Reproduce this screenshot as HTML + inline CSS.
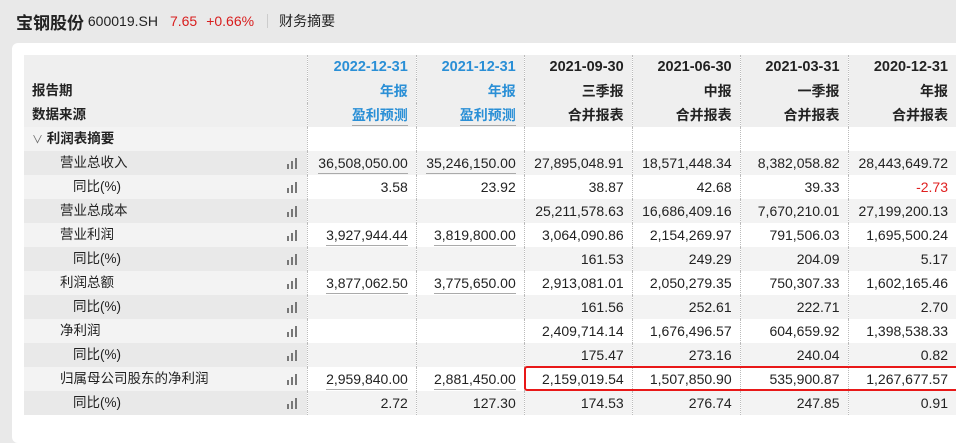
<!DOCTYPE html><html><head><meta charset="utf-8"><style>
*{margin:0;padding:0;box-sizing:border-box}
body{width:956px;height:414px;overflow:hidden;background:#e9e9e9;font-family:"Liberation Sans","Noto Sans CJK SC",sans-serif;color:#222;position:relative}
.top{position:absolute;left:16px;top:9px;height:24px;display:flex;align-items:center;font-size:14px;white-space:nowrap}
.card{position:absolute;left:12px;top:43px;width:960px;height:400px;background:#fff;border-radius:6px}
table{position:absolute;left:24px;top:55px;border-collapse:collapse;table-layout:fixed;font-size:14px}
td{height:24px;line-height:16px;padding:0 8px 0 0;text-align:right;white-space:nowrap;border-left:1px dotted #bbb;overflow:hidden}
td.l{text-align:left;border-left:none;padding:0;position:relative;font-size:13.5px}
tr.h td{background:#efefef;font-weight:bold}
tr.h td.d{font-size:14.5px}
tr.g td{background:#f3f3f3}tr.g td.l{background:#e9e9e9}
tr.w td{background:#fff}tr.w td.l{background:#f3f3f3}
.b{color:#2a8fd6}
.u span{border-bottom:1px solid #aaa;padding-bottom:2px}
.bars{position:absolute;right:9px;top:7px;width:11px;height:11px}
.bars i{position:absolute;bottom:0;width:2px;background:#777}
.r{color:#e02020}
</style></head><body>
<div class="top"><b style="font-size:17px">宝钢股份</b>&nbsp;600019.SH<span style="color:#d81e1e;margin-left:12px">7.65</span><span style="color:#d81e1e;margin-left:9px">+0.66%</span><span style="width:1px;height:14px;background:#ccc;margin:0 11px 0 13px"></span>财务摘要</div>
<div class="card"></div>
<table>
<colgroup><col style="width:284px"><col style="width:109px"><col style="width:108px"><col style="width:108px"><col style="width:108px"><col style="width:108px"><col style="width:108px"></colgroup>
<tr class="h"><td class="l"></td><td class="b d">2022-12-31</td><td class="b d">2021-12-31</td><td class="d">2021-09-30</td><td class="d">2021-06-30</td><td class="d">2021-03-31</td><td class="d">2020-12-31</td></tr>
<tr class="h"><td class="l" style="padding-left:8px">报告期</td><td class="b">年报</td><td class="b">年报</td><td>三季报</td><td>中报</td><td>一季报</td><td>年报</td></tr>
<tr class="h"><td class="l" style="padding-left:8px">数据来源</td><td class="b u"><span>盈利预测</span></td><td class="b u"><span>盈利预测</span></td><td>合并报表</td><td>合并报表</td><td>合并报表</td><td>合并报表</td></tr>
<tr class="w"><td class="l" style="padding-left:8px;font-weight:bold"><span style="font-weight:normal;color:#666;font-size:11px">∨</span> 利润表摘要</td><td></td><td></td><td></td><td></td><td></td><td></td></tr>
<tr class="g"><td class="l" style="padding-left:36px">营业总收入<span class="bars"><i style="left:0;height:5px"></i><i style="left:4px;height:8px"></i><i style="left:8px;height:11px"></i></span></td><td class="u"><span>36,508,050.00</span></td><td class="u"><span>35,246,150.00</span></td><td>27,895,048.91</td><td>18,571,448.34</td><td>8,382,058.82</td><td>28,443,649.72</td></tr>
<tr class="w"><td class="l" style="padding-left:49px">同比(%)<span class="bars"><i style="left:0;height:5px"></i><i style="left:4px;height:8px"></i><i style="left:8px;height:11px"></i></span></td><td>3.58</td><td>23.92</td><td>38.87</td><td>42.68</td><td>39.33</td><td class="r">-2.73</td></tr>
<tr class="g"><td class="l" style="padding-left:36px">营业总成本<span class="bars"><i style="left:0;height:5px"></i><i style="left:4px;height:8px"></i><i style="left:8px;height:11px"></i></span></td><td></td><td></td><td>25,211,578.63</td><td>16,686,409.16</td><td>7,670,210.01</td><td>27,199,200.13</td></tr>
<tr class="w"><td class="l" style="padding-left:36px">营业利润<span class="bars"><i style="left:0;height:5px"></i><i style="left:4px;height:8px"></i><i style="left:8px;height:11px"></i></span></td><td class="u"><span>3,927,944.44</span></td><td class="u"><span>3,819,800.00</span></td><td>3,064,090.86</td><td>2,154,269.97</td><td>791,506.03</td><td>1,695,500.24</td></tr>
<tr class="g"><td class="l" style="padding-left:49px">同比(%)<span class="bars"><i style="left:0;height:5px"></i><i style="left:4px;height:8px"></i><i style="left:8px;height:11px"></i></span></td><td></td><td></td><td>161.53</td><td>249.29</td><td>204.09</td><td>5.17</td></tr>
<tr class="w"><td class="l" style="padding-left:36px">利润总额<span class="bars"><i style="left:0;height:5px"></i><i style="left:4px;height:8px"></i><i style="left:8px;height:11px"></i></span></td><td class="u"><span>3,877,062.50</span></td><td class="u"><span>3,775,650.00</span></td><td>2,913,081.01</td><td>2,050,279.35</td><td>750,307.33</td><td>1,602,165.46</td></tr>
<tr class="g"><td class="l" style="padding-left:49px">同比(%)<span class="bars"><i style="left:0;height:5px"></i><i style="left:4px;height:8px"></i><i style="left:8px;height:11px"></i></span></td><td></td><td></td><td>161.56</td><td>252.61</td><td>222.71</td><td>2.70</td></tr>
<tr class="w"><td class="l" style="padding-left:36px">净利润<span class="bars"><i style="left:0;height:5px"></i><i style="left:4px;height:8px"></i><i style="left:8px;height:11px"></i></span></td><td></td><td></td><td>2,409,714.14</td><td>1,676,496.57</td><td>604,659.92</td><td>1,398,538.33</td></tr>
<tr class="g"><td class="l" style="padding-left:49px">同比(%)<span class="bars"><i style="left:0;height:5px"></i><i style="left:4px;height:8px"></i><i style="left:8px;height:11px"></i></span></td><td></td><td></td><td>175.47</td><td>273.16</td><td>240.04</td><td>0.82</td></tr>
<tr class="w"><td class="l" style="padding-left:36px">归属母公司股东的净利润<span class="bars"><i style="left:0;height:5px"></i><i style="left:4px;height:8px"></i><i style="left:8px;height:11px"></i></span></td><td class="u"><span>2,959,840.00</span></td><td class="u"><span>2,881,450.00</span></td><td>2,159,019.54</td><td>1,507,850.90</td><td>535,900.87</td><td>1,267,677.57</td></tr>
<tr class="g"><td class="l" style="padding-left:49px">同比(%)<span class="bars"><i style="left:0;height:5px"></i><i style="left:4px;height:8px"></i><i style="left:8px;height:11px"></i></span></td><td>2.72</td><td>127.30</td><td>174.53</td><td>276.74</td><td>247.85</td><td>0.91</td></tr>
</table>
<div style="position:absolute;left:524px;top:366px;width:440px;height:25px;border:2px solid #e81818;border-radius:3px"></div>
</body></html>
